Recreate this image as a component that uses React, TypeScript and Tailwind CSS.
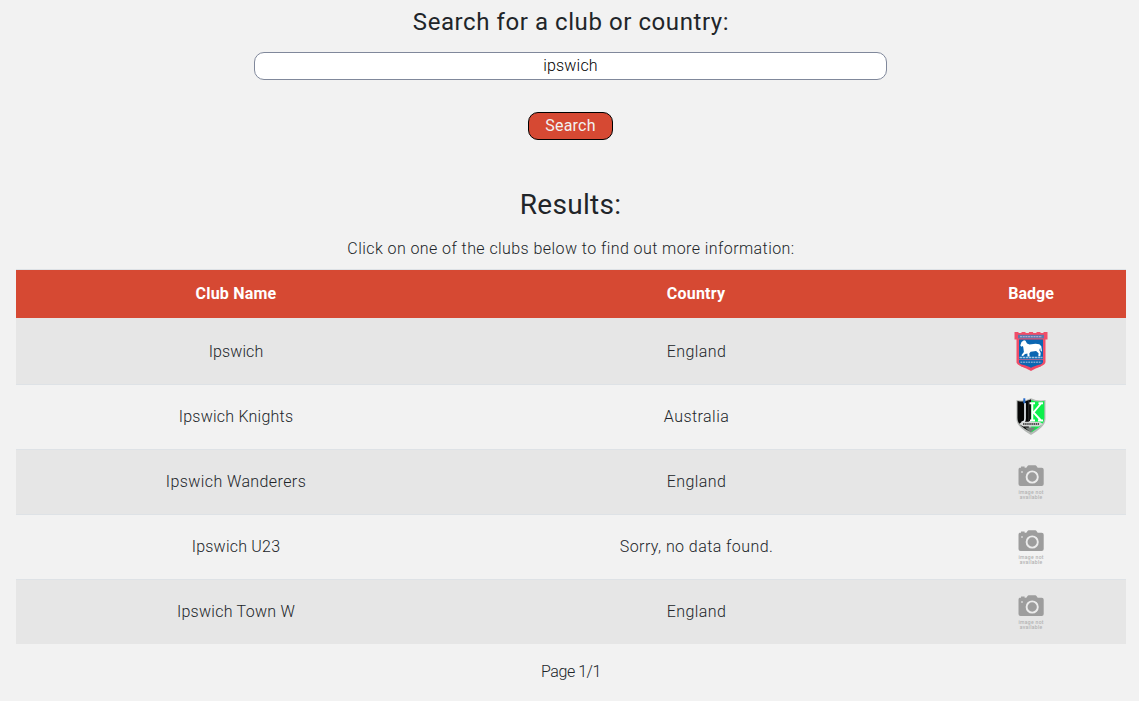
import React from "react";

type BadgeKind = "town" | "knights" | "none";

interface Club {
  name: string;
  country: string;
  badge: BadgeKind;
  nameClass: string;
  countryClass: string;
}

const clubs: Club[] = [
  { name: "Ipswich", country: "England", badge: "town", nameClass: "tracking-[0.1px]", countryClass: "tracking-[0.4px]" },
  { name: "Ipswich Knights", country: "Australia", badge: "knights", nameClass: "tracking-[0.23px]", countryClass: "tracking-[0.45px]" },
  { name: "Ipswich Wanderers", country: "England", badge: "none", nameClass: "tracking-[0.4px]", countryClass: "tracking-[0.4px]" },
  { name: "Ipswich U23", country: "Sorry, no data found.", badge: "none", nameClass: "tracking-[0.23px]", countryClass: "tracking-[0.43px]" },
  { name: "Ipswich Town W", country: "England", badge: "none", nameClass: "tracking-[0.27px]", countryClass: "tracking-[0.4px]" },
];

function TownBadge() {
  return (
    <svg viewBox="0 0 40 40" className="mx-auto block size-10">
      <path d="M3.500 1h4v1h3V1h4v1h3.400V1h4.200v1h3.400V1h4v1h3V1h4v7.500h-2V31c0 3.500-8.500 5.500-14.500 9C14 36.500 5.500 34.500 5.500 31V8.500h-2z" fill="#f04e69" />
      <path d="M7 3.800h26v3.600H7z" fill="#5a78ad" />
      <path d="M8 8.500h24V31c0 2.300-6.500 4-12 6.800C14.500 35 8 33.300 8 31z" fill="#0b66b2" />
      <path d="M9 5.600h22" stroke="#a9acd0" strokeWidth="1.100" strokeDasharray="2 .7" />
      <path d="M9.300 14.500l1.200-3.500 2.500-1.800 1.500.6 1.500 2.700 2.500 1 6-.7 3.800.4 2 2 .7 5.200-1.300-.3-.6-3.300-.8 2.500 1.400 2.700-.4 3.300h-2l.3-3-2.500-2.300-5.500.8-1.300 1.600.4 3h-2.200l-.1-3-2.400.5-2.200 2.300-1.400-1 2.500-3.300-.6-4.500-.4-1.500-1.400.8z" fill="#fff" />
      <path d="M8.500 26.500h23" stroke="#a6c5e2" strokeWidth="1.500" strokeDasharray="2.500 .6" />
      <path d="M8 28.600h24" stroke="#e56c88" strokeWidth=".7" />
      <path d="M9.500 31.300h21" stroke="#7fa6d0" strokeWidth="1.600" strokeDasharray="1.800 .8" />
      <path d="M10.500 34.500Q17 36 20 38Q23 36 29.500 34.500" fill="none" stroke="#ee4565" strokeWidth="1.800" />
    </svg>
  );
}

function KnightsBadge() {
  return (
    <svg viewBox="0 0 40 40" className="mx-auto block size-10">
      <path d="M5.500 4Q13 5.500 20 2.300Q27 5.500 34.500 4V23c0 7-7 11-14.500 16C12.500 34 5.500 30 5.500 23z" fill="#b5b9b6" />
      <path d="M6.500 5Q13 6.500 17.800 4V35C12 31.500 6.500 28.500 6.500 22z" fill="#050505" />
      <path d="M20 4Q26 6.500 33.300 5V22c0 6.500-6.300 10-13 14.500z" fill="#0cf04c" />
      <path d="M17.800 4.200l2.200-1V25h-2.200z" fill="#111" />
      <path d="M14 7v15.500q0 4-3.500 3.500" fill="none" stroke="#e8edf1" strokeWidth="1.700" />
      <path d="M13.300 2.300v5" stroke="#2368c8" strokeWidth="2" />
      <path d="M18.500 7.200h5.500M21.300 7v17.500M19 24.500h5M30 7.500L22.500 16.500l7.500 8M27.500 7.200h4.500M27 24.500h5" fill="none" stroke="#fff" strokeWidth="1.900" />
      <path d="M8 28l3-2.200h17.500L32 28l-4 2.500H12z" fill="#d6d8d7" />
      <path d="M12 28h16" stroke="#555" strokeWidth="1.900" strokeDasharray="1.500 .6" />
      <path d="M14 31.500h11l-5.500 5z" fill="#777f7a" />
    </svg>
  );
}

function MissingBadge() {
  return (
    <svg viewBox="0 0 40 40" className="mx-auto block size-10">
      <path d="M8.500 6.700h1.500V5.500h3.600v1.200h1.700L16.700 4.700q.3-.5.900-.5h6.800q.6 0 .9.500l1.400 2h4q2 0 2 2v14.300q0 2-2 2H9.500q-2 0-2-2V8.700q0-1.300 1-2z" fill="#9d9d9d" />
      <circle cx="21.200" cy="16" r="5.600" fill="none" stroke="#ececec" strokeWidth="1.900" />
      <circle cx="11" cy="11" r="1" fill="#d5d5d5" />
      <text x="20" y="32.500" textAnchor="middle" textLength="25" className="fill-[#b3b3b3] font-medium text-[5px]">image not</text>
      <text x="20" y="38" textAnchor="middle" textLength="22.500" className="fill-[#b3b3b3] font-medium text-[5px]">available</text>
    </svg>
  );
}

const badges: Record<BadgeKind, React.ReactElement> = {
  town: <TownBadge />,
  knights: <KnightsBadge />,
  none: <MissingBadge />,
};

export default function App() {
  return (
    <main className="flex h-[701px] flex-col items-center overflow-hidden bg-[#f2f2f2] pr-[13px] pl-4 font-['Roboto','Noto_Sans',sans-serif] text-base font-light text-[#212529]">
      <h1 className="mt-1.5 text-[24px] leading-8 font-normal tracking-[0.57px]">Search for a club or country:</h1>
      <input
        defaultValue="ipswich"
        aria-label="Club or country"
        className="mt-3.5 mr-0.5 h-7 w-[633px] rounded-[10px] border border-[#80889b] bg-white pb-0.5 pl-px text-center tracking-[0.2px] text-black outline-none"
      />
      <button className="mt-8 mr-0.5 h-7 w-[85px] rounded-[10px] border border-black bg-[#d64933] pl-px text-center leading-6 font-normal tracking-[0.2px] text-[#f1f1f1]">
        Search
      </button>
      <h2 className="mt-[47px] mr-px text-[28px] leading-9 font-normal tracking-[0.3px]">Results:</h2>
      <p className="mt-3.5 leading-6 tracking-[0.43px]">Click on one of the clubs below to find out more information:</p>
      <table className="mt-2 w-full table-fixed border-separate border-spacing-0 border-t border-[#dee2e6] text-center">
        <thead>
          <tr className="h-12 bg-[#d64933] text-white">
            <th className="w-[440px] p-0 font-bold tracking-[0.2px]">Club Name</th>
            <th className="w-[480px] p-0 font-bold tracking-[0.2px]">Country</th>
            <th className="p-0 font-bold">Badge</th>
          </tr>
        </thead>
        <tbody>
          {clubs.map((club, i) => {
            const line = i < clubs.length - 1 ? "border-b border-[#dee2e6]" : "";
            const pad = i === 0 ? "pt-[13px] pb-[13px]" : "pt-[11px] pb-[13px]";
            return (
              <tr key={club.name} className={i % 2 === 0 ? "bg-[#e6e6e6]" : "bg-[#f2f2f2]"}>
                <td className={`${line} p-0 ${i === 0 ? "pt-px" : ""} ${club.nameClass}`}>{club.name}</td>
                <td className={`${line} p-0 pl-px ${i === 0 ? "pt-px" : ""} ${club.countryClass}`}>{club.country}</td>
                <td className={`${line} ${pad} pr-px`}>{badges[club.badge]}</td>
              </tr>
            );
          })}
        </tbody>
      </table>
      <p className="mt-4 leading-6 tracking-[-0.45px]">Page 1/1</p>
    </main>
  );
}
